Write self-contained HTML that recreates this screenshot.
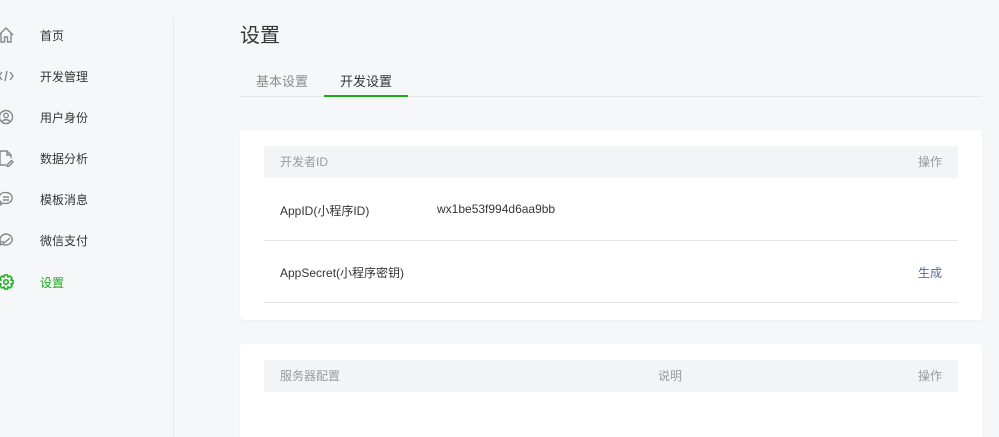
<!DOCTYPE html>
<html style="overflow:hidden;height:437px"><head><meta charset="utf-8"><style>
*{margin:0;padding:0;box-sizing:border-box}
body{width:999px;height:437px;overflow:hidden;background:#f6f7f9;font-family:"Liberation Sans","Noto Sans CJK SC",sans-serif;position:relative;color:#353535}
.nav{position:absolute;left:40px;font-size:12px;color:#353535}
.ic{position:absolute;left:-2px;width:18px;height:18px}
.div{position:absolute;left:173px;top:18px;width:1px;height:419px;background:#e7e8eb}
h1{position:absolute;left:240px;top:19px;font-size:20px;font-weight:normal;color:#353535}
.tabs{position:absolute;left:240px;top:96px;width:742px;height:1px;background:#e7e8eb}
.tab{position:absolute;top:71px;font-size:13px}
.card{position:absolute;left:240px;width:742px;background:#fff;border-radius:4px;box-shadow:0 1px 2px rgba(0,0,0,.04)}
.hd{position:absolute;left:24px;right:24px;height:32px;background:#f3f4f6;font-size:12px;color:#9a9a9a;line-height:32px}
.row{position:absolute;left:24px;right:24px;border-bottom:1px solid #e4e5e8;font-size:12px}
</style></head><body>
<svg class="ic" style="top:26px" viewBox="0 0 18 18" fill="none" stroke="#888" stroke-width="1.4"><path d="M1 9l7-7 7 7M3 7v9h3.5v-5h3v5H13V7"/></svg>
<div class="nav" style="top:27px">首页</div>
<svg class="ic" style="top:67px" viewBox="0 0 18 18" fill="none" stroke="#888" stroke-width="1.4"><path d="M4 5L1 9l3 4M9 4L7 14M12 5l3 4-3 4"/></svg>
<div class="nav" style="top:68px">开发管理</div>
<svg class="ic" style="top:108px" viewBox="0 0 18 18" fill="none" stroke="#888" stroke-width="1.4"><circle cx="8" cy="9" r="6.5"/><circle cx="8" cy="7.5" r="2.3"/><path d="M4 14c1-3 7-3 8 0"/></svg>
<div class="nav" style="top:109px">用户身份</div>
<svg class="ic" style="top:149px" viewBox="0 0 18 18" fill="none" stroke="#888" stroke-width="1.4"><path d="M2 2h7l4 4v3M2 2v14h6M9 2v4h4M9 16l4.5-4.5 1.5 1.5-4.5 4.5H9z"/></svg>
<div class="nav" style="top:150px">数据分析</div>
<svg class="ic" style="top:190px" viewBox="0 0 18 18" fill="none" stroke="#888" stroke-width="1.4"><path d="M8 2.5a6.5 5.5 0 1 1-3 10.5L2 15l1-3A6.5 5.5 0 0 1 8 2.5zM5 7h6M5 10h6"/></svg>
<div class="nav" style="top:191px">模板消息</div>
<svg class="ic" style="top:231px" viewBox="0 0 18 18" fill="none" stroke="#888" stroke-width="1.4"><path d="M8 3a6.5 5.5 0 1 1-4 10l-2 1 .8-3A6.5 5.5 0 0 1 8 3zM4 10l2 2 6-5"/></svg>
<div class="nav" style="top:232px">微信支付</div>
<svg class="ic" style="top:273px" viewBox="0 0 18 18" fill="none" stroke="#1aad19" stroke-width="1.5"><circle cx="8" cy="9" r="2.3"/><path d="M6.5 2h3l.5 2 2-1 2 2-1 2 2 .5v3l-2 .5 1 2-2 2-2-1-.5 2h-3l-.5-2-2 1-2-2 1-2-2-.5v-3l2-.5-1-2 2-2 2 1z"/></svg>
<div class="nav" style="top:274px;color:#1aad19">设置</div>
<div class="div"></div>
<h1>设置</h1>
<div class="tab" style="left:256px;color:#8c8c8c">基本设置</div>
<div class="tab" style="left:340px">开发设置</div>
<div class="tabs"></div>
<div style="position:absolute;left:324px;top:95px;width:84px;height:2px;background:#1aad19"></div>
<div class="card" style="top:130px;height:190px">
<div class="hd" style="top:16px"><span style="margin-left:16px">开发者ID</span><span style="position:absolute;right:16px">操作</span></div>
<div class="row" style="top:48px;height:63px"><span style="position:absolute;left:16px;top:24px">AppID(小程序ID)</span><span style="position:absolute;left:173px;top:24px">wx1be53f994d6aa9bb</span></div>
<div class="row" style="top:111px;height:62px"><span style="position:absolute;left:16px;top:23px">AppSecret(小程序密钥)</span><span style="position:absolute;right:16px;top:23px;color:#576b95">生成</span></div>
</div>
<div class="card" style="top:344px;height:93px;border-radius:4px 4px 0 0">
<div class="hd" style="top:16px"><span style="margin-left:16px">服务器配置</span><span style="position:absolute;left:394px">说明</span><span style="position:absolute;right:16px">操作</span></div>
</div>
</body></html>
